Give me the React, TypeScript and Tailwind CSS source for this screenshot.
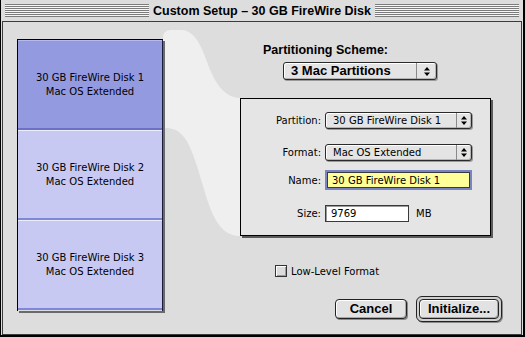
const reg = "font-['DejaVu_Sans',sans-serif] text-[10px] text-black";
const bold = "font-['Liberation_Sans',Arial,sans-serif] font-bold text-black";

function Arrows() {
  return (
    <svg width="6" height="9" viewBox="0 0 6 9">
      <path d="M3 0 L6 3.5 L0 3.5 Z" fill="#000" />
      <path d="M0 5.5 L6 5.5 L3 9 Z" fill="#000" />
    </svg>
  );
}

function Popup({ text, w, h, arrowW, textClass }: { text: string; w: string; h: string; arrowW: string; textClass: string }) {
  return (
    <div
      className={`flex ${w} ${h} items-stretch rounded-[3px] border border-[#2a2a2a] bg-[#e4e4e4] shadow-[1px_1px_0_#9a9a9a,inset_1px_1px_0_#ffffff,inset_-1px_-1px_0_#b5b5b5]`}
    >
      <div className={`flex flex-1 items-center pl-[7px] ${textClass}`}>{text}</div>
      <div className={`flex ${arrowW} items-center justify-center border-l border-[#8a8a8a]`}>
        <Arrows />
      </div>
    </div>
  );
}

function Disk({ n, selected }: { n: number; selected?: boolean }) {
  return (
    <div
      className={`flex h-[90px] flex-col items-center justify-center border-t border-b-2 leading-[14px] ${reg} ${
        selected ? "border-t-[#b4b9ee] border-b-[#6a71c6] bg-[#949ae0]" : "border-t-[#eceefe] border-b-[#8187d8] bg-[#c7c9f3]"
      }`}
    >
      <span>30 GB FireWire Disk {n}</span>
      <span>Mac OS Extended</span>
    </div>
  );
}

export default function App() {
  return (
    <div className="flex h-[337px] w-[525px] flex-col overflow-hidden border-b-2 border-l border-r-2 border-black bg-[#dddddd]">
      {/* title bar */}
      <div className="flex h-[21px] shrink-0 items-center gap-[4px] px-[4px]">
        <div className="h-[13px] flex-1 bg-[repeating-linear-gradient(to_bottom,#7c7c7c_0px,#7c7c7c_1px,#f6f6f6_1px,#f6f6f6_2px)]" />
        <span className={`${bold} text-[12.5px] leading-[14px]`}>Custom Setup – 30 GB FireWire Disk</span>
        <div className="h-[13px] flex-1 bg-[repeating-linear-gradient(to_bottom,#7c7c7c_0px,#7c7c7c_1px,#f6f6f6_1px,#f6f6f6_2px)]" />
      </div>

      {/* content */}
      <div className="relative mx-[1px] flex flex-1 border border-[#3c3c3c] bg-[#dddddd]">
        <svg className="absolute left-0 top-0" width="520" height="312" viewBox="0 0 520 312">
          <g transform="translate(-3,-22)">
            <path
              d="M163,38 Q163,30 171,30 L181,30 C198,30 204,55 211,72 C219,90 229,98 240,98 L240,236 C226,236 216,226 208,202 C199,174 192,142 180,133 C174,128 169,128 163,128 Z"
              fill="#efefef"
            />
          </g>
        </svg>

        {/* disks */}
        <div className="relative ml-[14px] mt-[17px] h-[272px] w-[146px] border border-b-0 border-l-black border-r-[#1b1b3a] border-t-black shadow-[2px_2px_0_#6a6a6a]">
          <Disk n={1} selected />
          <Disk n={2} />
          <Disk n={3} />
        </div>

        {/* right side */}
        <div className="relative flex flex-1 flex-col">
          <div className={`${bold} ml-[100px] mt-[21px] text-[12.5px] leading-[14px]`}>Partitioning Scheme:</div>
          <div className="ml-[120px] mt-[5px]">
            <Popup text="3 Mac Partitions" w="w-[154px]" h="h-[18px]" arrowW="w-[20px]" textClass={`${bold} text-[13px]`} />
          </div>

          <div className="ml-[77px] mt-[18px] flex h-[138px] w-[251px] flex-col border border-black bg-[#e5e5e5] shadow-[2px_2px_0_#5a5a5a]">
            <div className="mt-[13px] flex h-[17px] items-center">
              <span className={`${reg} w-[80px] text-right`}>Partition:</span>
              <div className="ml-[4px]">
                <Popup text="30 GB FireWire Disk 1" w="w-[147px]" h="h-[17px]" arrowW="w-[15px]" textClass={reg} />
              </div>
            </div>
            <div className="mt-[15px] flex h-[17px] items-center">
              <span className={`${reg} w-[80px] text-right`}>Format:</span>
              <div className="ml-[4px]">
                <Popup text="Mac OS Extended" w="w-[147px]" h="h-[17px]" arrowW="w-[15px]" textClass={reg} />
              </div>
            </div>
            <div className="mt-[9px] flex h-[20px] items-center">
              <span className={`${reg} w-[80px] text-right`}>Name:</span>
              <div className="ml-[4px] h-[20px] w-[147px] border-2 border-[#7a84c2]">
                <div className={`flex h-full items-center border border-[#3a3a3a] bg-[#ffff99] pl-[4px] ${reg}`}>
                  30 GB FireWire Disk 1
                </div>
              </div>
            </div>
            <div className="mt-[15px] flex h-[17px] items-center">
              <span className={`${reg} w-[80px] text-right`}>Size:</span>
              <div
                className={`ml-[4px] flex h-[17px] w-[84px] items-center border border-[#3a3a3a] bg-white pl-[5px] shadow-[inset_1px_1px_0_#9a9a9a] ${reg}`}
              >
                9769
              </div>
              <span className={`${reg} ml-[7px]`}>MB</span>
            </div>
          </div>

          <div className="ml-[112px] mt-[29px] flex h-[12px] items-center gap-[4px]">
            <div className="h-[12px] w-[12px] border border-[#333] bg-[#dcdcdc] shadow-[inset_1px_1px_0_#ffffff,inset_-1px_-1px_0_#9c9c9c]" />
            <span className={reg}>Low-Level Format</span>
          </div>

          <div className="ml-[172px] mt-[19px] flex h-[26px] items-center gap-[9px]">
            <div
              className={`flex h-[20px] w-[72px] items-center justify-center rounded-[4px] border border-[#222] bg-[#e2e2e2] shadow-[1px_1px_0_#8a8a8a,inset_1px_1px_0_#ffffff,inset_-1px_-1px_0_#a8a8a8] ${bold} text-[13px]`}
            >
              Cancel
            </div>
            <div className="h-[26px] w-[86px] rounded-[6px] border border-[#222] bg-[#cfcfcf] p-[2px] shadow-[1px_1px_0_#8a8a8a]">
              <div
                className={`flex h-[20px] w-[80px] items-center justify-center rounded-[4px] border border-[#222] bg-[#e2e2e2] shadow-[inset_1px_1px_0_#ffffff,inset_-1px_-1px_0_#a8a8a8] ${bold} text-[13px]`}
              >
                Initialize...
              </div>
            </div>
          </div>
        </div>
      </div>
    </div>
  );
}
